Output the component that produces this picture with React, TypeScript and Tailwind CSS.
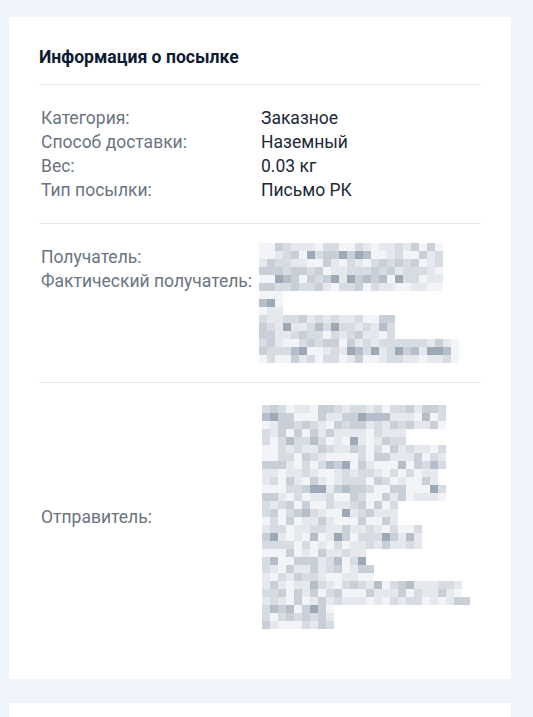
import React from "react";

function mulberry32(a: number) {
  return function () {
    a |= 0;
    a = (a + 0x6d2b79f5) | 0;
    let t = Math.imul(a ^ (a >>> 15), 1 | a);
    t = (t + Math.imul(t ^ (t >>> 7), 61 | t)) ^ t;
    return ((t ^ (t >>> 14)) >>> 0) / 4294967296;
  };
}

function pick(v: number, mid: boolean) {
  const x = mid ? v : v * 0.75;
  if (x < 0.2) return "#f3f4f7";
  if (x < 0.4) return "#e5e8ec";
  if (x < 0.6) return "#d7dce2";
  if (x < 0.78) return "#c9cfd7";
  if (x < 0.9) return "#b6bec9";
  return "#9ea9b8";
}

function Mosaic({ rows, seed }: { rows: number[]; seed: number }) {
  const cell = 8;
  const rnd = mulberry32(seed);
  const maxW = Math.max(...rows) * cell;
  const rects: React.ReactNode[] = [];
  rows.forEach((n, r) => {
    for (let c = 0; c < n; c++) {
      rects.push(
        <rect key={`${r}-${c}`} x={c * cell} y={r * cell} width={cell} height={cell} fill={pick(rnd(), r % 3 === 1)} />
      );
    }
  });
  return (
    <svg width={maxW} height={rows.length * cell} viewBox={`0 0 ${maxW} ${rows.length * cell}`} className="block">
      {rects}
    </svg>
  );
}

const recipientRows = [23, 23, 23, 23, 23, 23, 3, 3, 3, 17, 17, 17, 25, 25, 25];
const senderRows = [23, 23, 23, 18, 18, 23, 23, 23, 22, 22, 23, 23, 17, 17, 17, 20, 20, 20, 13, 13, 14, 14, 25, 25, 26, 9, 9, 9];

const info = [
  ["Категория:", "Заказное"],
  ["Способ доставки:", "Наземный"],
  ["Вес:", "0.03 кг"],
  ["Тип посылки:", "Письмо РК"],
];

export default function App() {
  return (
    <div className="h-[717px] overflow-hidden bg-[#eff3fb] pt-[17px] pl-[9px]" style={{ fontFamily: "Roboto, 'Noto Sans', sans-serif" }}>
      <div className="w-[502px] bg-white px-[30px] pt-[28px] pb-[50px]">
        <h2 className="text-[17.6px] font-bold leading-6 text-[#0d1b33] mb-[15px]">Информация о посылке</h2>
        <div className="h-px bg-[#e4e7ec]" />
        <div className="pt-[21px] pb-[21px] pl-[2px] text-[17.5px] leading-6">
          {info.map(([k, v]) => (
            <div key={k} className="flex">
              <div className="w-[220px] text-[#6b7480]">{k}</div>
              <div className="text-[#1d2838]">{v}</div>
            </div>
          ))}
        </div>
        <div className="h-px bg-[#e4e7ec]" />
        <div className="flex pt-[19px] pb-[19px] pl-[2px] text-[17.5px] leading-6">
          <div className="w-[218px] pt-[2px] text-[#6b7480]">
            <div>Получатель:</div>
            <div>Фактический получатель:</div>
          </div>
          <Mosaic rows={recipientRows} seed={7} />
        </div>
        <div className="h-px bg-[#e4e7ec]" />
        <div className="flex items-center pt-[22px] pl-[2px] text-[17.5px] leading-6">
          <div className="w-[221px] text-[#6b7480]">Отправитель:</div>
          <Mosaic rows={senderRows} seed={31} />
        </div>
      </div>
      <div className="mt-[24px] h-[60px] w-[502px] bg-white" />
    </div>
  );
}
